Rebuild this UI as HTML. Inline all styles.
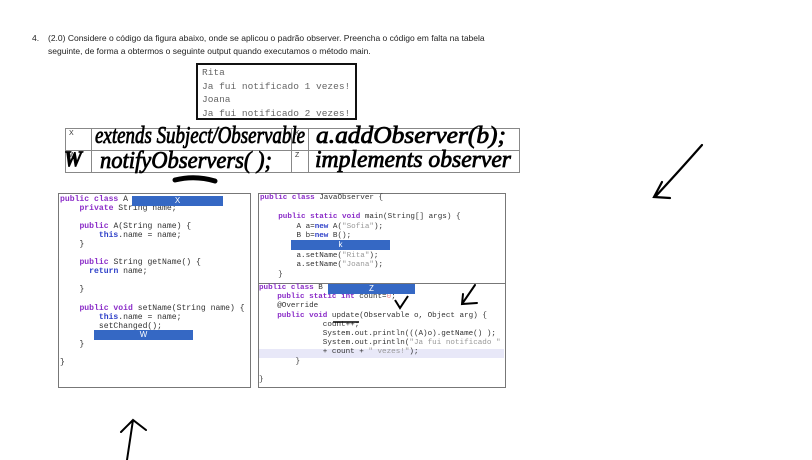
<!DOCTYPE html>
<html><head><meta charset="utf-8"><style>
body{margin:0;width:812px;height:460px;background:#fff;position:relative;overflow:hidden;font-family:"Liberation Sans",sans-serif}
.a{position:absolute}
.hdr{font-size:8.5px;color:#222;line-height:13px}
.out{left:196px;top:63px;border:2px solid #111;font:9.5px/13.5px "Liberation Mono",monospace;color:#666;padding:1px 0 0 4px;box-sizing:border-box;width:161px;height:57px}
table{border-collapse:collapse;position:absolute;left:65px;top:128px;width:455px}
td{border:1px solid #888;height:19px;font-size:7px;vertical-align:top;padding:1px 3px;color:#333}
.box{border:1.5px solid #777;box-sizing:border-box;background:#fff}
.code{font-family:"Liberation Mono",monospace;color:#333;white-space:pre;position:absolute}
.k{color:#8b2dc8;font-weight:bold}.b{color:#2d3fc8;font-weight:bold}.s{color:#999}
.bar{position:absolute;background:#3568c4;color:#fff;font-size:8px;text-align:center;line-height:10px;height:10px}
</style></head><body>
<div class="a hdr" style="left:32px;top:32px">4.</div>
<div class="a hdr" style="left:48px;top:32px">(2.0) Considere o código da figura abaixo, onde se aplicou o padrão observer. Preencha o código em falta na tabela<br>seguinte, de forma a obtermos o seguinte output quando executamos o método main.</div>
<div class="a out">Rita<br>Ja fui notificado 1 vezes!<br>Joana<br>Ja fui notificado 2 vezes!</div>
<table><tr><td style="width:19px">X</td><td style="width:193px"></td><td style="width:10px">K</td><td></td></tr>
<tr><td>W</td><td></td><td>Z</td><td></td></tr></table>
<svg class="a" style="left:0;top:0" width="812" height="460" font-family="Liberation Serif, serif" font-style="italic" fill="#000" stroke="#000" stroke-width="0.8">
<text x="95" y="143" font-size="24" textLength="210" lengthAdjust="spacingAndGlyphs">extends Subject/Observable</text>
<text x="316" y="143" font-size="24" textLength="190" lengthAdjust="spacingAndGlyphs">a.addObserver(b);</text>
<text x="64" y="166" font-size="22" font-weight="bold" textLength="18" lengthAdjust="spacingAndGlyphs">W</text>
<text x="100" y="168" font-size="24" textLength="172" lengthAdjust="spacingAndGlyphs">notifyObservers( );</text>
<text x="315" y="167" font-size="24" textLength="196" lengthAdjust="spacingAndGlyphs">implements observer</text>
<path d="M175 180 Q195 175 215 181" stroke-width="5" fill="none" stroke-linecap="round"/>
<path d="M702 145 Q680 170 655 197 M662 182 L654 197 L670 198" stroke-width="2.2" fill="none" stroke-linecap="round"/>
<path d="M127 460 L133 420 M121 432 L133 420 L146 430" stroke-width="2" fill="none" stroke-linecap="round"/>
</svg>
<div class="a box" style="left:58px;top:193px;width:193px;height:195px"></div>
<div class="a box" style="left:258px;top:193px;width:248px;height:91px"></div>
<div class="a box" style="left:258px;top:283px;width:248px;height:105px"></div>
<div class="code" style="left:60px;top:195px;font-size:8.1px;line-height:9.05px"><span class="k">public class</span> A
    <span class="k">private</span> String name;

    <span class="k">public</span> A(String name) {
        <span class="b">this</span>.name = name;
    }

    <span class="k">public</span> String getName() {
      <span class="b">return</span> name;

    }

    <span class="k">public void</span> setName(String name) {
        <span class="b">this</span>.name = name;
        setChanged();

    }

}</div>
<div class="a" style="left:259px;top:349px;width:245px;height:9px;background:#e8e8f8"></div>
<div class="code" style="left:260px;top:194px;font-size:7.6px;line-height:9.6px"><span class="k">public class</span> JavaObserver {

    <span class="k">public static void</span> main(String[] args) {
        A a=<span class="b">new</span> A(<span class="s">"Sofia"</span>);
        B b=<span class="b">new</span> B();

        a.setName(<span class="s">"Rita"</span>);
        a.setName(<span class="s">"Joana"</span>);
    }</div>
<div class="code" style="left:259px;top:284px;font-size:7.6px;line-height:9.2px"><span class="k">public class</span> B
    <span class="k">public static int</span> count=<span style="color:#e88">0</span>;
    @Override
    <span class="k">public void</span> update(Observable o, Object arg) {
              count++;
              System.out.println(((A)o).getName() );
              System.out.println(<span class="s">"Ja fui notificado "</span>
              + count + <span class="s">" vezes!"</span>);
        }

}</div>
<div class="bar" style="left:132px;top:196px;width:91px">X</div>
<div class="bar" style="left:291px;top:240px;width:99px">k</div>
<div class="bar" style="left:94px;top:330px;width:99px">W</div>
<div class="bar" style="left:328px;top:284px;width:87px">Z</div>
<svg class="a" style="left:0;top:0" width="812" height="460">
<path d="M333 322 L359 322" stroke="#000" stroke-width="1.5"/>
<path d="M395 300 L400 308 L408 296" stroke="#000" stroke-width="2" fill="none"/>
<path d="M475 285 L462 304 M463 294 L462 304 L477 303" stroke="#000" stroke-width="2" fill="none" stroke-linecap="round"/>
</svg>
</body></html>
